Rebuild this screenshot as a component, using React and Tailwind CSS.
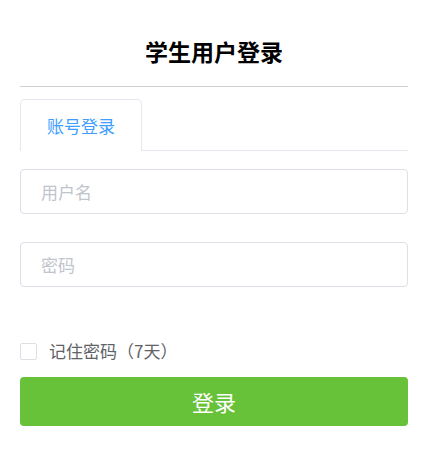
export default function App() {
  return (
    <div className="w-[428px] h-[462px] bg-white px-5 pt-[34px]" style={{ fontFamily: '"Noto Sans CJK SC", "Noto Sans", sans-serif' }}>
      <h1 className="text-center text-[23px] font-bold text-black leading-[34px]">学生用户登录</h1>
      <div className="mt-[18px] h-px bg-[#d0d0d4]" />
      <div className="mt-3 flex">
        <div className="w-[122px] h-[52px] border border-b-0 border-[#e4e7ed] rounded-t-[5px] flex items-center justify-center text-[17px] text-[#409eff]">账号登录</div>
        <div className="flex-1 border-b border-[#e4e7ed]" />
      </div>
      <div className="mt-[18px] h-[45px] border border-[#dcdfe6] rounded-[4px] flex items-center px-5 text-[17px] text-[#c0c4cc]">用户名</div>
      <div className="mt-[28px] h-[45px] border border-[#dcdfe6] rounded-[4px] flex items-center px-5 text-[17px] text-[#c0c4cc]">密码</div>
      <div className="mt-[52px] flex items-center h-[24px]">
        <div className="w-[17px] h-[17px] border border-[#dcdfe6] rounded-[2px]" />
        <span className="ml-[12px] text-[17px] text-[#606266]">记住密码（7天）</span>
      </div>
      <div className="mt-[14px] h-[49px] bg-[#67c23a] rounded-[4px] flex items-center justify-center text-[22px] text-white">登录</div>
    </div>
  );
}
